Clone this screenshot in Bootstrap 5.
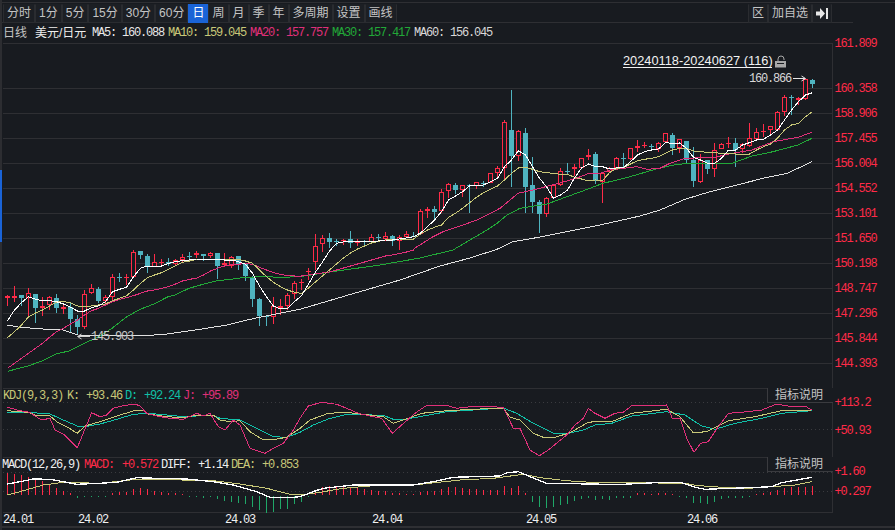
<!DOCTYPE html>
<html lang="zh">
<head>
    <meta charset="UTF-8">
    <title>美元/日元 日线</title>
    <link href="https://cdn.jsdelivr.net/npm/bootstrap@5.3.3/dist/css/bootstrap.min.css" rel="stylesheet">
    <style>
        html, body { background: #181b20; overflow: hidden; }
        .kline-app { width: 895px; height: 530px; overflow: hidden; font-family: "Liberation Sans", "Noto Sans CJK SC", sans-serif; }
        .side-rail { width: 2px; flex: none; background: #2c2d31; }
        .side-thumb { height: 72px; margin-top: 170px; background: #1a63d6; }
        .kline-main { flex: 1; min-width: 0; }
        .tool-row { height: 20px; margin-top: 2px; border-top: 1px solid #2e2f33; padding: 1px 0 0 1px; }
        .tool-btn { height: 19px; padding: 0 3px; font-size: 12px; line-height: 17px; color: #c4c4c4; background: #1c1f24; border: 1px solid #2a2c30; border-radius: 0; border-top-color: transparent; }
        .tool-btn.is-on { background: #1a63d6; border-color: #1a63d6; color: #fff; }
        .tool-end { margin-left: auto; margin-right: 63px; }
        .info-row { height: 21px; width: 851px; border-top: 1px solid #2e2f33; padding-left: 1px; font-size: 12px; line-height: 20px; color: #c4c4c4; white-space: pre; }
        .info-name { width: 32px; }
        .info-pair { width: 57px; color: #eee; }
        .mono-num { font-family: "Liberation Mono", "Noto Sans CJK SC", monospace; font-size: 12px; letter-spacing: -1.2px; }
        .info-ma { width: 82px; }
        .info-first { width: 76px; }
        .chart-wrap { height: 487px; margin-left: -2px; }
        .chart-svg { display: block; overflow: visible; }
        .chart-svg text { font-family: "Liberation Mono", monospace; font-size: 12px; letter-spacing: -1.2px; }
        .chart-svg text.range-text { font-family: "Liberation Sans", sans-serif; font-size: 12.8px; letter-spacing: 0; }
        .help-tag { position: absolute; left: 767px; width: 66px; height: 15px; padding: 0 0 0 7px; font-size: 12px; line-height: 14px; color: #c4c4c4; background: #181b20; border: 1px solid #3a3b3f; border-top: 0; border-right: 0; border-radius: 0; text-align: left; }
        .help-kdj { top: 345px; }
        .help-macd { top: 414px; }
    </style>
</head>
<body>
<div class="kline-app d-flex">
    <div class="side-rail"><div class="side-thumb"></div></div>
    <div class="kline-main">
        <div class="tool-row d-flex">
            <button class="btn tool-btn">分时</button>
            <button class="btn tool-btn">1分</button>
            <button class="btn tool-btn">5分</button>
            <button class="btn tool-btn">15分</button>
            <button class="btn tool-btn">30分</button>
            <button class="btn tool-btn">60分</button>
            <button class="btn tool-btn is-on">日</button>
            <button class="btn tool-btn">周</button>
            <button class="btn tool-btn">月</button>
            <button class="btn tool-btn">季</button>
            <button class="btn tool-btn">年</button>
            <button class="btn tool-btn">多周期</button>
            <button class="btn tool-btn">设置</button>
            <button class="btn tool-btn">画线</button>
            <div class="tool-end d-flex">
                <button class="btn tool-btn">区</button>
                <button class="btn tool-btn">加自选</button>
                <button class="btn tool-btn d-flex align-items-center" aria-label="收起">
                    <svg width="12" height="11" viewBox="0 0 12 11"><path d="M0 3.5h4V0l5 5.5-5 5.5V7.5H0z" fill="#e6e6e6"/><rect x="10" y="0" width="2" height="11" fill="#e6e6e6"/></svg>
                </button>
            </div>
        </div>
        <div class="info-row d-flex">
            <span class="info-name">日线</span><span class="info-pair">美元/日元</span>
            <span class="mono-num info-first" style="color:#e8e8e8">MA5: 160.088</span>
            <span class="mono-num info-ma" style="color:#c8c878">MA10: 159.045</span>
            <span class="mono-num info-ma" style="color:#e0307a">MA20: 157.757</span>
            <span class="mono-num info-ma" style="color:#22a838">MA30: 157.417</span>
            <span class="mono-num" style="color:#d8d8d8">MA60: 156.045</span>
        </div>
        <div class="chart-wrap position-relative">
            <svg id="chart" class="chart-svg" width="895" height="487" viewBox="0 43 895 487"></svg>
            <button class="btn help-tag help-kdj">指标说明</button>
            <button class="btn help-tag help-macd">指标说明</button>
        </div>
    </div>
</div>

<script src="https://cdn.jsdelivr.net/npm/bootstrap@5.3.3/dist/js/bootstrap.bundle.min.js"></script>
<script>
    const RED = '#ff2b48', TEAL = '#4fb4c0', GRID = '#2e2f33';
    const YELLOW = '#c8c878', PINK = '#e0307a', GREEN = '#22a838', CYAN = '#10c0a8';

    // 蜡烛: 类型, 上影, 实体上, 实体下, 下影 (屏幕 y)
    const candles = [
        ['r',295,296,298,306],['r',286,296,298,302],['t',295,295,298,306],['r',288,293,298,317],['t',294,294,308,323],
        ['r',297,306,308,316],['r',296,297,305,310],['t',294,298,308,313],['r',303,307,309,314],['t',303,307,319,333],
        ['t',315,319,327,335],['r',290,294,327,329],['r',284,288,293,294],['t',287,289,301,303],['r',295,297,301,306],
        ['r',274,277,297,301],['t',273,277,278,282],['r',274,277,278,285],['r',250,252,277,277],['t',251,251,255,259],
        ['t',254,256,267,273],['r',254,262,267,267],['r',259,262,263,267],['t',258,262,264,266],['r',259,260,264,266],
        ['r',254,257,260,263],['t',252,256,257,261],['r',251,253,255,258],['t',254,254,256,261],['r',252,253,256,258],
        ['t',253,253,266,279],['r',253,263,265,266],['r',256,257,266,268],['t',256,256,264,270],['t',264,264,276,281],
        ['t',276,277,299,307],['t',298,299,316,326],['t',315,316,317,326],['r',297,306,317,324],['r',299,306,308,315],
        ['r',293,295,306,310],['r',281,283,294,299],['r',279,282,283,290],['r',268,271,272,280],['r',234,246,262,270],
        ['r',235,238,244,252],['t',233,238,242,248],['t',239,241,242,246],['r',239,240,241,245],['t',231,239,243,248],
        ['r',239,241,243,246],['t',240,241,242,246],['r',234,237,242,243],['t',234,237,238,241],['r',232,236,239,241],
        ['t',235,236,241,246],['r',235,237,241,250],['r',231,234,237,237],['t',232,236,237,237],['r',209,211,234,235],
        ['r',207,209,211,218],['t',206,209,212,220],['r',189,192,211,213],['r',183,184,191,198],['t',183,185,190,194],
        ['r',185,185,190,197],['t',184,185,186,213],['r',182,182,186,189],['t',181,183,184,187],['r',173,173,183,183],
        ['r',166,168,173,179],['r',120,122,168,179],['t',90,130,156,187],['r',130,131,156,161],['t',128,133,187,213],
        ['t',157,185,202,213],['t',200,202,214,233],['r',197,198,214,217],['r',184,185,198,199],['r',168,171,185,186],
        ['t',163,171,172,175],['r',164,167,169,176],['r',158,158,168,168],['r',149,155,157,160],['t',152,154,180,184],
        ['r',172,173,182,203],['r',167,168,172,173],['r',157,158,168,170],['t',153,158,159,169],['r',148,148,159,160],
        ['r',140,146,148,152],['r',142,145,146,148],['t',144,146,147,151],['r',142,143,149,152],['r',133,133,142,143],
        ['t',133,135,148,155],['r',139,139,148,153],['t',141,141,160,163],['t',147,160,181,187],['r',154,160,182,183],
        ['t',160,160,169,174],['r',143,150,169,177],['r',143,144,149,149],['r',137,143,144,148],['t',138,143,150,167],
        ['r',143,144,149,153],['r',123,138,146,147],['r',128,132,139,141],['r',124,131,132,137],['r',126,126,130,135],
        ['r',111,112,130,130],['r',95,97,112,116],['t',95,97,98,115],['r',97,98,100,105],['r',79,79,99,100],['t',79,80,84,88]
    ];

    const ma5 = [320.7,310,302.7,296.7,299.3,300.7,300.7,301.7,304,307.3,311,311,307.7,306,301.7,291.7,289.3,287.3,276.7,268.3,266,266,266,263.3,261.7,260.7,260,259,259,259,259.3,260,260,261.7,264.3,273.3,286,296.7,306,309,308.3,301.7,295.7,
        284,272,262,251,243.3,242,241.3,241.3,241.3,241.3,241,240,240,239,238,236.7,233,226.7,220,211.7,200,196,191.7,186,185.3,185,181.7,178.3,166.7,160,150.7,155,166.7,178.3,186.7,198.3,195,190,178,168,164,166.7,166.7,169,168,167.7,161.7,155,151.7,150,149,142.7,143.3,143,148.3,157.3,160,163.3,163.3,158.3,150,150,145,142.7,140,139.3,135,130,120,110,101.7,95,92.7];
    const ma10 = [337.7,331.7,325,317,313,310,306,302,301.7,302.7,306,306.7,306,305,304,300.7,298.3,295.7,290,283.3,277.7,275,272.7,269.3,265.7,262.3,261,259.3,259,259,259.3,259.3,259.3,259.3,261,263.3,270,276.7,282.3,286.7,290,292.3,293.3,
        288,282,276,270,264,258,253,249,246,243,241.3,240,239.3,239,239,239,234,230,227.3,225,217.3,213.3,208.3,202.7,197.3,192.7,189.3,186,180,173.3,168,167.3,169.3,171.7,172.7,173.3,174.3,174.3,177.3,179,181,180,180.7,172.7,168.3,167.7,164,160.7,159.3,158.3,156.7,153.3,150,148.3,148.3,151,151.7,152.3,152.7,153.3,153.3,154,154,154,150,146.7,144,138.3,130,125,123.3,116.7,111.7];
    const ma20 = [368.3,363.3,358.3,353.3,348.3,343.3,337.3,331.7,328.3,324,320,315,310.7,308.3,305,301.7,299.3,297.7,295.7,293.3,291,290,288.3,286.7,284,281,279.3,278.3,275,271,268.3,266,264.3,264.3,263.3,264.3,267.3,270,272.7,274.3,275.7,276,276,
        275,274,273,272,270,268,266,264,262,260,258,256,255,253.5,252,250].map((y, i) => [7.5 + 7 * i, y])
        .concat([[415,248],[433,236.7],[443,231.7],[463,225],[477,220],[500,208.3],[518,193.3],[533,190],[560,183],[577,178],[590,173],[600,173.3],[610,170],[623,168.3],[637,166.7],[647,169.3],[660,168.3],[670,163.3],[685,158.3],[715,157.3],[732,153.3],[752,150],[773,141.7],[798,137.3],[812,132.3]]);
    const ma30 = [[7.5,371.3],[28,366],[42,361],[56,354],[70,350.7],[84,343.3],[98,337.3],[112,328.3],[126,317.3],[140,309.3],[154,304],[168,296.7],[175,295],[189,288.3],[203,284.3],[217,280.7],[231,279.3],[245,277.3],[266,276.7],[280,277.3],[300,276.7],[330,272],[380,265],[420,258],[453,250],[467,241.7],[487,230],[497,223.3],[507,215],[520,208.3],[547,204],[567,196.7],[590,188.3],[603,183.3],[617,180],[630,176.7],[647,171.7],[660,168],[677,164.3],[693,163.3],[732,163.3],[752,156],[773,151.7],[798,145],[812,138.3]];
    const ma60 = [[7.5,325],[20,327.3],[43,329],[63,330],[78,335],[100,335.3],[150,335.3],[167,334],[200,329.3],[227,325],[247,320],[267,315.7],[300,309.3],[345,296],[400,280],[440,266],[470,258],[497,249.3],[513,241.7],[533,238.3],[567,231.7],[600,225],[640,216],[660,210],[685,199.3],[710,191.7],[733,186],[763,178.3],[787,173.3],[800,167.3],[812,161.7]];

    // 放大图坐标转屏幕坐标
    const zoomed = (ox, oy, list) => list.map(p => [ox + p[0] / 3, oy + p[1] / 3]);

    const kdjJ = zoomed(0,380,[[22,82],[60,92],[90,97],[105,108],[125,120],[150,115],[165,150],[190,162],[232,203],[275,98],[300,110],[320,105],[340,85],[370,77],[405,72],[420,78],[440,100],[470,108],[510,115],[550,118],[590,100],[610,108],[630,100],[655,140],[675,150],[700,120],[720,135],[750,205],[795,220],[820,205],[850,190],[880,150]])
        .concat(zoomed(300,380,[[0,115],[25,78],[65,67],[110,73],[140,85],[175,100],[210,108],[245,115],[277,160],[305,135],[345,100],[380,76],[440,76],[470,85],[530,78],[610,82],[640,145],[660,145],[690,210],[718,227],[745,210],[800,165],[825,135],[850,115],[865,85]]))
        .concat(zoomed(595,380,[[0,100],[30,115],[60,100],[85,97],[110,77],[160,78],[215,75],[232,115],[255,115],[275,175],[297,217],[317,190],[340,185],[370,140],[400,100],[440,97],[500,90],[545,72],[590,80],[630,78],[650,90]]));
    const kdjK = zoomed(0,380,[[22,92],[85,97],[105,105],[150,108],[170,125],[200,140],[232,160],[255,138],[300,125],[350,108],[400,93],[430,92],[445,102],[500,110],[550,113],[590,105],[640,105],[660,120],[690,125],[720,122],[750,155],[790,180],[830,177],[860,172]])
        .concat(zoomed(300,380,[[0,145],[30,120],[85,100],[140,97],[180,102],[250,110],[280,130],[310,120],[365,100],[440,92],[520,88],[610,84],[630,112],[660,120],[700,160],[730,172],[765,172],[810,158],[865,127]]))
        .concat(zoomed(595,380,[[0,125],[50,125],[110,100],[215,88],[255,110],[295,158],[335,155],[400,122],[480,110],[560,92],[650,90]]));
    const kdjD = zoomed(0,380,[[22,98],[85,97],[150,102],[190,120],[232,138],[255,140],[300,132],[350,118],[400,103],[445,100],[500,105],[550,110],[590,108],[640,105],[660,115],[720,120],[780,150],[820,170],[860,172]])
        .concat(zoomed(300,380,[[0,157],[40,135],[85,117],[140,103],[250,106],[280,118],[315,118],[370,108],[440,95],[520,90],[610,84],[650,100],[700,130],[760,160],[805,160],[850,150]]))
        .concat(zoomed(595,380,[[0,135],[50,130],[110,108],[215,95],[270,105],[320,138],[360,148],[420,130],[500,115],[560,100],[650,92]]));
    const diff = zoomed(0,380,[[22,312],[60,305],[100,297],[150,298],[190,305],[230,313],[300,310],[350,307],[410,293],[470,295],[560,297],[640,305],[700,315],[770,335],[810,352],[880,352]])
        .concat(zoomed(300,380,[[0,350],[45,333],[70,325],[160,315],[340,315],[400,305],[460,292],[600,288],[620,278],[655,275],[690,290],[740,310],[870,312]]))
        .concat(zoomed(595,380,[[0,312],[60,314],[180,308],[260,308],[300,322],[330,328],[460,323],[530,320],[560,308],[650,292]]));
    const dea = zoomed(0,380,[[22,345],[60,335],[130,315],[190,307],[300,310],[390,300],[450,298],[640,302],[720,312],[800,325],[870,343]])
        .concat(zoomed(300,380,[[0,345],[60,337],[130,325],[220,317],[340,315],[480,300],[580,295],[670,283],[720,293],[800,302],[870,307]]))
        .concat(zoomed(595,380,[[0,307],[270,310],[300,316],[380,322],[460,325],[530,320],[600,315],[650,305]]));

    // MACD 柱顶 (放大图 y, 基准 346)
    const bars = [278,282,285,290,295,303,315,323,333,340,351,344,349,344,349,338,335,335,328,323,328,333,335,338,340,342,344,349,350,349,355,360,362,365,370,378,388,397,393,385,383,370,362,345,335,322,318,320,318,322,325,328,330,333,333,338,338,342,342,335,333,332,327,320,320,323,327,327,330,330,330,318,323,318,338,362,378,380,378,372,368,360,353,350,357,355,358,352,352,350,340,340,342,338,338,342,344,350,367,367,368,364,355,352,352,350,347,342,338,335,330,325,322,322,320,318];

    let svg = '';
    const hline = (y, x2, color) => { svg += `<rect x="3" y="${y}" width="${x2 - 3}" height="1" fill="${color || GRID}"/>`; };
    const label = (x, y, str, color) => { svg += `<text x="${x}" y="${y}" fill="${color}">${str}</text>`; };

    // 网格
    [43, 88, 113, 138, 163, 188, 213, 238, 263, 288, 313, 338, 363, 388, 457, 512].forEach(y => hline(y, 833));
    svg += `<rect x="0" y="526" width="895" height="2" fill="${GRID}"/>`;
    svg += `<rect x="832" y="43" width="1" height="470" fill="${GRID}"/>`;
    [402, 429, 472, 491].forEach(y => {
        svg += `<line x1="3" x2="832" y1="${y + .5}" y2="${y + .5}" stroke="#3a3b3f" stroke-dasharray="1 3"/>`;
    });

    // K线
    candles.forEach((c, i) => {
        const x = 7 + 7 * i, color = c[0] === 'r' ? RED : TEAL;
        const h = c[3] - c[2];
        svg += `<rect x="${x}" y="${c[1]}" width="1" height="${Math.max(c[4] - c[1], 1)}" fill="${color}"/>`;
        if (c[0] === 't' || h < 3) {
            svg += `<rect x="${x - 2}" y="${c[2]}" width="5" height="${Math.max(h, 1)}" fill="${color}"/>`;
        } else {
            svg += `<rect x="${x - 1.5}" y="${c[2] + .5}" width="4" height="${h - 1}" fill="#181b20" stroke="${color}" stroke-width="1"/>`;
        }
    });

    const polyline = (pts, color, width) => {
        svg += `<polyline points="${pts.map(p => p[0].toFixed(1) + ',' + p[1].toFixed(1)).join(' ')}" fill="none" stroke="${color}" stroke-width="${width || 1}" shape-rendering="crispEdges"/>`;
    };
    const byIndex = ys => ys.map((y, i) => [7.5 + 7 * i, y]);
    polyline(ma60, '#e0e0e0');
    polyline(ma30, GREEN);
    polyline(ma20, PINK);
    polyline(byIndex(ma10), YELLOW);
    polyline(byIndex(ma5), '#ffffff');

    // 指标
    polyline(kdjD, CYAN);
    polyline(kdjK, YELLOW);
    polyline(kdjJ, PINK);
    bars.forEach((z, i) => {
        const x = 7 + 7 * i, top = Math.round(380 + z / 3), base = 495;
        const up = top < base;
        svg += `<rect x="${x}" y="${up ? top : base + 1}" width="1" height="${Math.max(Math.abs(base - top), 1)}" fill="${up ? RED : '#1fa868'}"/>`;
    });
    polyline(dea, YELLOW);
    polyline(diff, '#ffffff', 1.3);

    // 右侧刻度
    [['161.809',47],['160.358',92],['158.906',117],['157.455',142],['156.004',167],['154.552',192],['153.101',217],['151.650',242],['150.198',267],['148.747',292],['147.296',317],['145.844',342],['144.393',367],
     ['+113.2',406],['+50.93',434],['+1.60',475],['+0.297',495]].forEach(t => label(834.5, t[1], t[0], RED));

    // 时间轴
    [['24.01',3],['24.02',78],['24.03',225],['24.04',372],['24.05',526],['24.06',687]].forEach(t => label(t[1], 523, t[0], '#f0f0f0'));

    // 指标标题
    label(3, 399, 'KDJ(9,3,3)', YELLOW); label(67, 399, 'K:', YELLOW); label(86, 399, '+93.46', YELLOW);
    label(125, 399, 'D:', CYAN); label(144, 399, '+92.24', CYAN);
    label(183, 399, 'J:', PINK); label(202, 399, '+95.89', PINK);
    label(2, 468, 'MACD(12,26,9)', '#f0f0f0'); label(84, 468, 'MACD:', RED); label(122, 468, '+0.572', RED);
    label(161, 468, 'DIFF:', '#f0f0f0'); label(198, 468, '+1.14', '#f0f0f0');
    label(231, 468, 'DEA:', YELLOW); label(262, 468, '+0.853', YELLOW);

    // 区间标注
    svg += `<text class="range-text" x="623" y="65" fill="#f2f2f2">20240118-20240627 (116)</text>`;
    svg += `<rect x="623" y="67" width="149" height="1" fill="#f2f2f2"/>`;
    svg += `<path d="M778 62v-3a3 3 0 0 1 6 0v1" fill="none" stroke="#a8a8a8"/><rect x="775" y="61" width="11" height="6.5" fill="#a8a8a8"/><rect x="777" y="63" width="7" height="1" fill="#181b20"/>`;

    // 最高最低价标注
    label(749, 82, '160.866', '#d8d8d8');
    svg += `<path d="M793 78.5h12M801.5 76l4 2.5-4 2.5" fill="none" stroke="#e6e6e6"/>`;
    label(91, 340, '145.903', '#c8c8c8');
    svg += `<path d="M90 336.5H78M81.5 334l-4 2.5 4 2.5" fill="none" stroke="#d0d0d0"/>`;

    document.getElementById('chart').innerHTML = svg;
</script>
</body>
</html>
